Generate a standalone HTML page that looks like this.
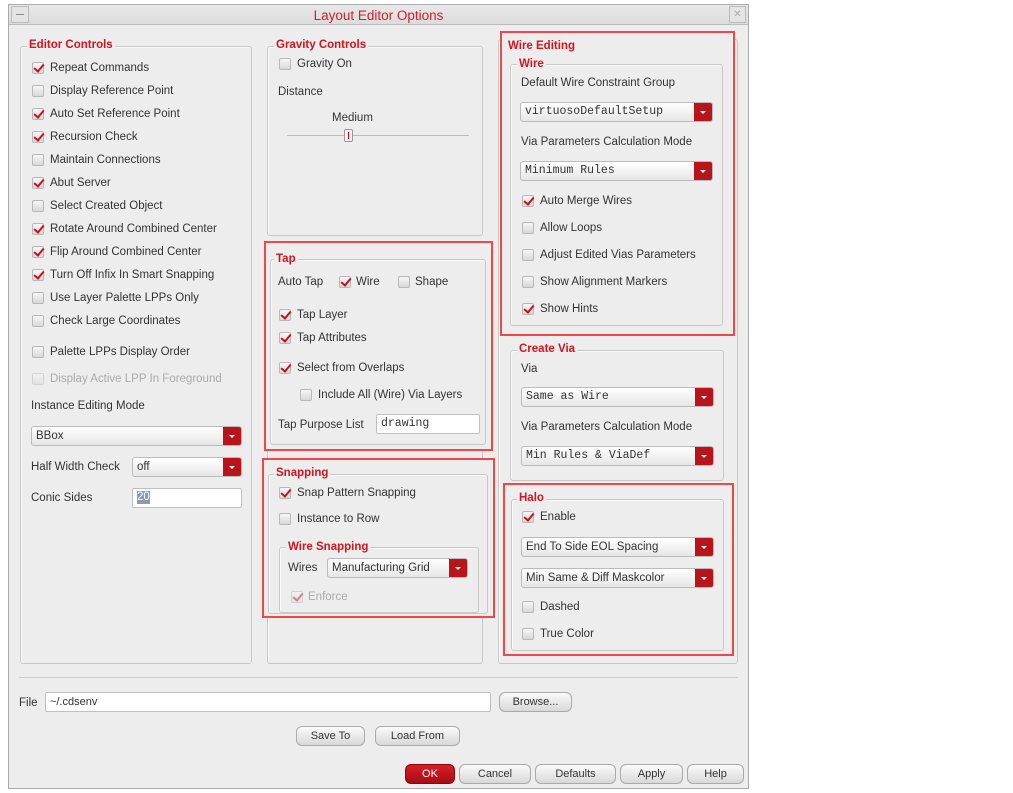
<!DOCTYPE html>
<html><head><meta charset="utf-8"><style>
body{margin:0;width:1013px;height:793px;background:#fff;position:relative;overflow:hidden;font-family:"Liberation Sans",sans-serif;font-size:11.5px;color:#333}
div,span{position:absolute;box-sizing:border-box}
.dlg{left:8px;top:4px;width:741px;height:785px;background:#ededed;border:1px solid #aaa}
.tb{left:9px;top:5px;width:739px;height:20px;background:linear-gradient(#e8e8e8,#dcdcdc);border-bottom:1px solid #bbb}
.title{left:0;top:3px;width:739px;text-align:center;color:#d0202a;font-size:13.5px}
.grp{border:1px solid #c8c8c8;border-radius:3px;box-shadow:inset 1px 1px 0 #fafafa}
.lg{font-weight:bold;color:#d4141e;background:#ededed;padding:0 2px;font-size:11.5px;line-height:12px;white-space:nowrap}
.red{border:2px solid #f04848}
.cb{width:12px;height:12px;border:1px solid #b8b8b8;border-radius:2px;background:linear-gradient(#f6f6f6,#d8d8d8)}
.cb.on::after{content:"";position:absolute;left:3px;top:-1px;width:4px;height:8px;border:solid #c8101a;border-width:0 2.5px 2.5px 0;transform:rotate(40deg)}
.cb.dis{opacity:.5}
.t{white-space:nowrap;line-height:14px}
.dd{height:20px;border:1px solid #bbb;border-radius:3px;background:linear-gradient(#fff,#e6e6e6);padding-left:4px;line-height:18px;white-space:nowrap}
.dd::after{content:"";position:absolute;right:0;top:0;width:18px;height:18px;background:#b8141c;border-radius:0 2px 2px 0}
.dd i{position:absolute;right:6px;top:8px;width:0;height:0;border:3px solid transparent;border-top:3px solid #fff;z-index:2}
.mono{font-family:"Liberation Mono",monospace;font-size:11.5px}
.in{height:20px;background:#fff;border:1px solid #c0c0c0;border-radius:2px;padding-left:4px;line-height:18px}
.btn{height:20px;border:1px solid #aaa;border-radius:6px;background:linear-gradient(#fbfbfb,#d8d8d8);text-align:center;line-height:18px;font-size:11px;color:#333}
</style></head><body>
<div class="dlg"></div>
<div class="tb"><div class="title">Layout Editor Options</div>
<div style="left:2px;top:1px;width:18px;height:17px;border:1px solid #bbb;background:#e4e4e4"><div style="left:4px;top:7px;width:8px;height:1px;background:#888"></div></div>
<div style="left:720px;top:1px;width:17px;height:17px;border:1px solid #bbb;background:#e4e4e4;font-size:10px;color:#aaa;text-align:center;line-height:15px">✕</div>
</div>

<!-- Editor Controls -->
<div class="grp" style="left:20px;top:46px;width:232px;height:618px"></div>
<div class="lg" style="left:27px;top:39px">Editor Controls</div>
<div class="cb on" style="left:32px;top:62px"></div><div class="t" style="left:50px;top:61px">Repeat Commands</div>
<div class="cb" style="left:32px;top:85px"></div><div class="t" style="left:50px;top:84px">Display Reference Point</div>
<div class="cb on" style="left:32px;top:108px"></div><div class="t" style="left:50px;top:107px">Auto Set Reference Point</div>
<div class="cb on" style="left:32px;top:131px"></div><div class="t" style="left:50px;top:130px">Recursion Check</div>
<div class="cb" style="left:32px;top:154px"></div><div class="t" style="left:50px;top:153px">Maintain Connections</div>
<div class="cb on" style="left:32px;top:177px"></div><div class="t" style="left:50px;top:176px">Abut Server</div>
<div class="cb" style="left:32px;top:200px"></div><div class="t" style="left:50px;top:199px">Select Created Object</div>
<div class="cb on" style="left:32px;top:223px"></div><div class="t" style="left:50px;top:222px">Rotate Around Combined Center</div>
<div class="cb on" style="left:32px;top:246px"></div><div class="t" style="left:50px;top:245px">Flip Around Combined Center</div>
<div class="cb on" style="left:32px;top:269px"></div><div class="t" style="left:50px;top:268px">Turn Off Infix In Smart Snapping</div>
<div class="cb" style="left:32px;top:292px"></div><div class="t" style="left:50px;top:291px">Use Layer Palette LPPs Only</div>
<div class="cb" style="left:32px;top:315px"></div><div class="t" style="left:50px;top:314px">Check Large Coordinates</div>
<div class="cb" style="left:32px;top:346px"></div><div class="t" style="left:50px;top:345px">Palette LPPs Display Order</div>
<div class="cb dis" style="left:32px;top:373px"></div><div class="t" style="left:50px;top:372px;color:#aaa">Display Active LPP In Foreground</div>
<div class="t" style="left:31px;top:399px">Instance Editing Mode</div>
<div class="dd" style="left:31px;top:426px;width:211px">BBox<i></i></div>
<div class="t" style="left:31px;top:460px">Half Width Check</div>
<div class="dd" style="left:132px;top:457px;width:110px">off<i></i></div>
<div class="t" style="left:31px;top:491px">Conic Sides</div>
<div class="in" style="left:132px;top:488px;width:110px"><span style="left:4px;top:2px;background:#8a9ab0;color:#fff;line-height:13px">20</span></div>

<!-- Middle column -->
<div class="grp" style="left:267px;top:46px;width:216px;height:190px"></div>
<div class="lg" style="left:274px;top:39px">Gravity Controls</div>
<div class="cb" style="left:279px;top:58px"></div><div class="t" style="left:297px;top:57px">Gravity On</div>
<div class="t" style="left:278px;top:85px">Distance</div>
<div class="t" style="left:332px;top:111px">Medium</div>
<div style="left:287px;top:135px;width:182px;height:1px;background:#bbb"></div>
<div style="left:344px;top:129px;width:9px;height:13px;border:1px solid #999;border-radius:2px;background:#f4f4f4"><div style="left:3px;top:2px;width:1px;height:7px;background:#c00"></div></div>

<div class="grp" style="left:267px;top:244px;width:216px;height:420px"></div>
<div class="red" style="left:264px;top:241px;width:229px;height:210px;background:#ededed"></div>
<div class="grp" style="left:270px;top:259px;width:216px;height:186px"></div>
<div class="lg" style="left:274px;top:253px">Tap</div>
<div class="t" style="left:278px;top:275px">Auto Tap</div>
<div class="cb on" style="left:339px;top:276px"></div><div class="t" style="left:356px;top:275px">Wire</div>
<div class="cb" style="left:398px;top:276px"></div><div class="t" style="left:415px;top:275px">Shape</div>
<div class="cb on" style="left:279px;top:309px"></div><div class="t" style="left:297px;top:308px">Tap Layer</div>
<div class="cb on" style="left:279px;top:332px"></div><div class="t" style="left:297px;top:331px">Tap Attributes</div>
<div class="cb on" style="left:279px;top:362px"></div><div class="t" style="left:297px;top:361px">Select from Overlaps</div>
<div class="cb" style="left:300px;top:389px"></div><div class="t" style="left:318px;top:388px">Include All (Wire) Via Layers</div>
<div class="t" style="left:278px;top:418px">Tap Purpose List</div>
<div class="in mono" style="left:376px;top:414px;width:104px">drawing</div>

<div class="red" style="left:262px;top:458px;width:233px;height:160px;background:#ededed"></div>
<div class="grp" style="left:268px;top:474px;width:220px;height:140px"></div>
<div class="lg" style="left:274px;top:467px">Snapping</div>
<div class="cb on" style="left:279px;top:487px"></div><div class="t" style="left:297px;top:486px">Snap Pattern Snapping</div>
<div class="cb" style="left:279px;top:513px"></div><div class="t" style="left:297px;top:512px">Instance to Row</div>
<div class="grp" style="left:279px;top:547px;width:200px;height:66px"></div>
<div class="lg" style="left:286px;top:541px">Wire Snapping</div>
<div class="t" style="left:288px;top:561px">Wires</div>
<div class="dd" style="left:327px;top:558px;width:141px">Manufacturing Grid<i></i></div>
<div class="cb on dis" style="left:291px;top:591px"></div><div class="t" style="left:308px;top:590px;color:#aaa">Enforce</div>

<!-- Right column -->
<div class="grp" style="left:498px;top:39px;width:240px;height:625px"></div>
<div class="red" style="left:500px;top:31px;width:235px;height:305px;background:#ededed"></div>
<div class="lg" style="left:506px;top:40px">Wire Editing</div>
<div class="grp" style="left:510px;top:64px;width:213px;height:262px"></div>
<div class="lg" style="left:517px;top:58px">Wire</div>
<div class="t" style="left:521px;top:76px">Default Wire Constraint Group</div>
<div class="dd mono" style="left:520px;top:102px;width:193px">virtuosoDefaultSetup<i></i></div>
<div class="t" style="left:521px;top:135px">Via Parameters Calculation Mode</div>
<div class="dd mono" style="left:520px;top:161px;width:193px">Minimum Rules<i></i></div>
<div class="cb on" style="left:522px;top:195px"></div><div class="t" style="left:540px;top:194px">Auto Merge Wires</div>
<div class="cb" style="left:522px;top:222px"></div><div class="t" style="left:540px;top:221px">Allow Loops</div>
<div class="cb" style="left:522px;top:249px"></div><div class="t" style="left:540px;top:248px">Adjust Edited Vias Parameters</div>
<div class="cb" style="left:522px;top:276px"></div><div class="t" style="left:540px;top:275px">Show Alignment Markers</div>
<div class="cb on" style="left:522px;top:303px"></div><div class="t" style="left:540px;top:302px">Show Hints</div>

<div class="grp" style="left:510px;top:350px;width:214px;height:131px"></div>
<div class="lg" style="left:517px;top:343px">Create Via</div>
<div class="t" style="left:521px;top:362px">Via</div>
<div class="dd mono" style="left:521px;top:387px;width:193px">Same as Wire<i></i></div>
<div class="t" style="left:521px;top:420px">Via Parameters Calculation Mode</div>
<div class="dd mono" style="left:521px;top:446px;width:193px">Min Rules &amp; ViaDef<i></i></div>

<div class="red" style="left:503px;top:483px;width:231px;height:173px;background:#ededed"></div>
<div class="grp" style="left:511px;top:499px;width:213px;height:152px"></div>
<div class="lg" style="left:517px;top:492px">Halo</div>
<div class="cb on" style="left:522px;top:511px"></div><div class="t" style="left:540px;top:510px">Enable</div>
<div class="dd" style="left:521px;top:537px;width:193px">End To Side EOL Spacing<i></i></div>
<div class="dd" style="left:521px;top:568px;width:193px">Min Same &amp; Diff Maskcolor<i></i></div>
<div class="cb" style="left:522px;top:601px"></div><div class="t" style="left:540px;top:600px">Dashed</div>
<div class="cb" style="left:522px;top:628px"></div><div class="t" style="left:540px;top:627px">True Color</div>

<!-- bottom -->
<div style="left:19px;top:677px;width:719px;height:1px;background:#ccc"></div>
<div class="t" style="left:19px;top:696px">File</div>
<div class="in" style="left:45px;top:692px;width:446px;font-size:11px">~/.cdsenv</div>
<div class="btn" style="left:499px;top:692px;width:73px">Browse...</div>
<div class="btn" style="left:296px;top:726px;width:69px">Save To</div>
<div class="btn" style="left:375px;top:726px;width:85px">Load From</div>
<div class="btn" style="left:405px;top:764px;width:50px;background:linear-gradient(#d42028,#a80c14);color:#fff;border-color:#900">OK</div>
<div class="btn" style="left:459px;top:764px;width:72px">Cancel</div>
<div class="btn" style="left:535px;top:764px;width:81px">Defaults</div>
<div class="btn" style="left:620px;top:764px;width:63px">Apply</div>
<div class="btn" style="left:687px;top:764px;width:57px">Help</div>
</body></html>
